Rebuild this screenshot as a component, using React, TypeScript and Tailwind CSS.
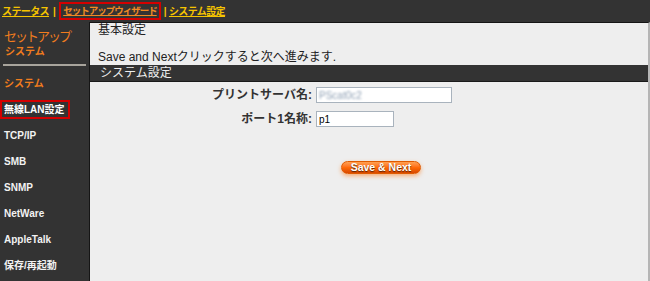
export default function App() {
  const menu = ['TCP/IP', 'SMB', 'SNMP', 'NetWare', 'AppleTalk', '保存/再起動'];

  return (
    <div className="w-[650px] h-[281px] bg-[#333333] flex flex-col overflow-hidden font-['Liberation_Sans','Noto_Sans_CJK_JP',sans-serif]">
      {/* Top links */}
      <div className="h-[22px] flex items-center pl-[2px] text-[10px] font-bold tracking-[-0.6px]">
        <a className="text-[#f5c400] underline">ステータス</a>
        <span className="text-[#f5c400] mx-[4px]">|</span>
        <span className="border-2 border-[#d40000] h-[18px] flex items-center px-[2px]">
          <a className="text-[#f08a24] underline text-[9.5px] tracking-[-1px]">セットアップウィザード</a>
        </span>
        <span className="text-[#f5c400] mx-[3px]">|</span>
        <a className="text-[#f5c400] underline">システム設定</a>
      </div>

      <div className="flex flex-1">
        {/* Sidebar */}
        <div className="w-[89px] shrink-0 flex flex-col">
          <div className="pl-[4px] pt-[6px] text-[#f07c1e] text-[13px] leading-[17px] tracking-[-2px]">セットアップ</div>
          <div className="pl-[5px] text-[#f07c1e] text-[10px] font-bold leading-[13px]">システム</div>
          <div className="mt-[6px] mx-[3px] h-[2px] bg-[#a8a49c]"></div>
          <div className="mt-[4px] h-[26px] flex items-center pl-[4px] text-[#f07c1e] text-[10px] font-bold">システム</div>
          <div className="h-[26px] flex items-center">
            <span className="border-2 border-[#d40000] pl-[2px] pr-[3px] h-[19px] flex items-center text-white text-[10px] font-bold">無線LAN設定</span>
          </div>
          {menu.map((m) => (
            <div key={m} className="h-[26px] flex items-center pl-[4px] text-[#f2f2f2] text-[10px] font-bold">
              {m}
            </div>
          ))}
        </div>

        {/* Main panel */}
        <div className="flex-1 bg-[#eeeeee] border-t border-l border-[#151515] border-r-2 border-r-[#b5b5b5] flex flex-col">
          <div className="pl-[8px] text-[12px] leading-[14px] text-[#222]">基本設定</div>
          <div className="mt-[13px] pl-[8px] text-[12px] leading-[14px] text-[#222]">Save and Nextクリックすると次へ進みます.</div>
          <div className="mt-[1px] h-[17px] bg-[#333333] border-b border-[#1a1a1a] flex items-center pl-[10px] text-[12px] text-[#eeeeee]">
            システム設定
          </div>

          <div className="mt-[4px] grid grid-cols-[222px_1fr] gap-x-[4px] gap-y-[6px] items-center">
            <div className="text-right text-[12px] font-semibold text-[#333]">プリントサーバ名:</div>
            <div className="w-[136px] h-[16px] border border-[#a9b3bd] bg-white flex items-center pl-[2px] text-[10px]">
              <span className="blur-[0.8px] text-[#8fa0b4]">PScat0c2</span>
            </div>
            <div className="text-right text-[12px] font-semibold text-[#333]">ポート1名称:</div>
            <div className="w-[78px] h-[16px] border border-[#a9b3bd] bg-white flex items-center pl-[2px] text-[10px] text-black">
              p1
            </div>
          </div>

          <div className="mt-[33px] ml-[251px]">
            <button className="w-[80px] h-[13px] rounded-full bg-gradient-to-b from-[#ffa050] via-[#ff6a08] to-[#d84800] border border-[#e05a00] shadow-[0_2px_4px_rgba(255,120,20,0.55)] flex items-center justify-center text-[10.5px] font-bold text-white leading-none [text-shadow:0_1px_1px_#5a2000]">
              Save &amp; Next
            </button>
          </div>
        </div>
      </div>
    </div>
  );
}
